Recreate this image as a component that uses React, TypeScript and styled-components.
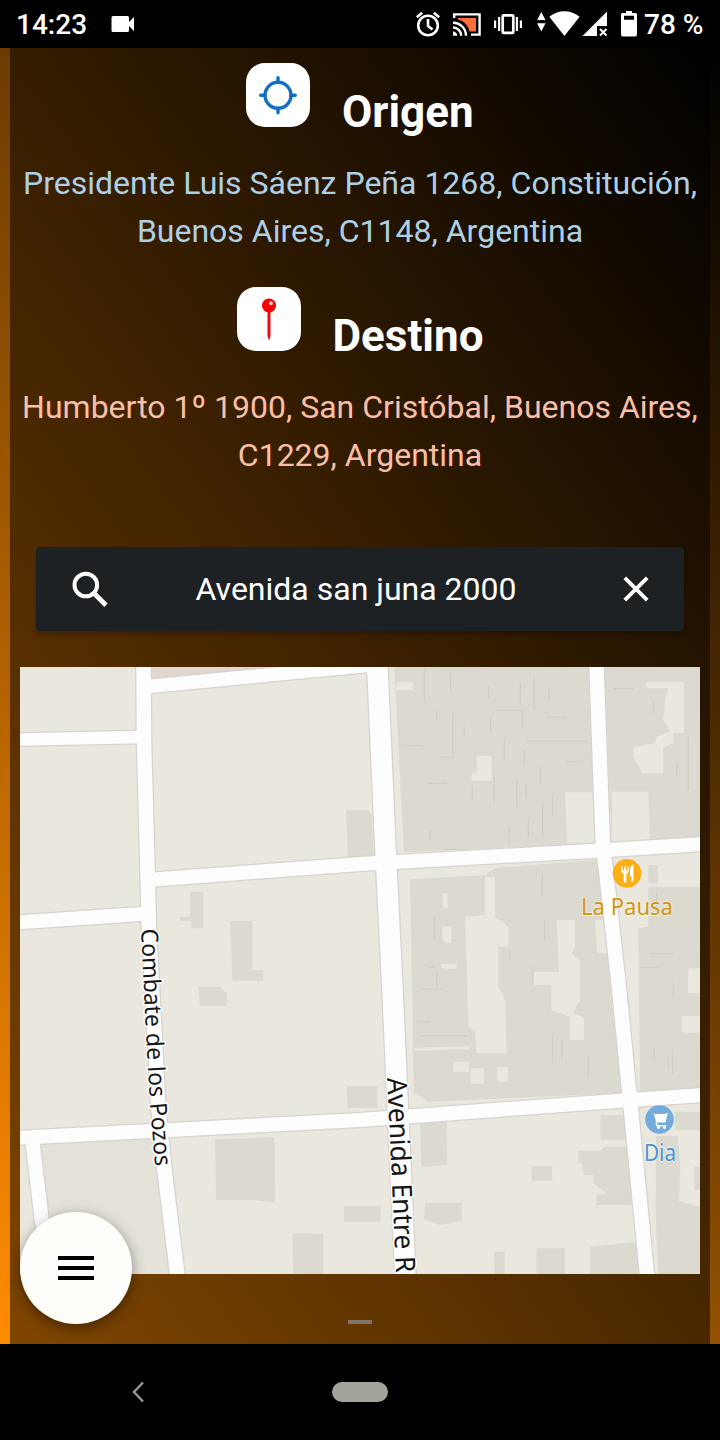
import React from 'react';
import styled, { createGlobalStyle } from 'styled-components';

const GlobalStyle = createGlobalStyle`
  * { box-sizing: border-box; }
  body { margin: 0; background: #000; font-family: Roboto, "Liberation Sans", sans-serif; }
`;

const Phone = styled.div`
  width: 720px;
  height: 1440px;
  display: flex;
  flex-direction: column;
  overflow: hidden;
  background: #000;
`;

const StatusBar = styled.header`
  height: 48px;
  flex: none;
  display: flex;
  align-items: center;
  padding: 0 17px 0 16px;
  color: #fff;
  font-size: 28px;
  font-weight: 500;
  line-height: 48px;
  white-space: nowrap;
`;

const Clock = styled.span`
  width: 94px;
  padding-top: 2px;
`;

const Battery = styled.span`
  width: 59px;
  padding-top: 2px;
  margin-left: 7px;
`;

const StatusIcon = styled.svg<{ $gap?: number; $push?: boolean }>`
  flex: none;
  height: 48px;
  margin-left: ${({ $gap = 0, $push }) => ($push ? 'auto' : `${$gap}px`)};
  fill: #fff;
`;

const Screen = styled.main`
  height: 1296px;
  flex: none;
  padding: 0 10px;
  background: linear-gradient(53deg, #ff8c00, #000);
`;

const Panel = styled.div`
  height: 100%;
  position: relative;
  display: flex;
  flex-direction: column;
  padding: 15px 10px 0;
  background: rgba(0, 0, 0, 0.5);
`;

const Place = styled.section`
  height: 224px;
`;

const PlaceHeader = styled.div`
  height: 96px;
  display: flex;
  justify-content: center;
  gap: 32px;
`;

const IconTile = styled.span`
  width: 64px;
  height: 64px;
  border-radius: 19px;
  background: #fff;
  svg { display: block; }
`;

const PlaceTitle = styled.h2<{ $width: number }>`
  width: ${({ $width }) => $width}px;
  margin: 0;
  padding-top: 22px;
  color: #fff;
  font-size: 44px;
  font-weight: 700;
  line-height: 54px;
  white-space: nowrap;
`;

const Address = styled.p<{ $color: string }>`
  margin: 0 -10px;
  color: ${({ $color }) => $color};
  font-size: 32px;
  line-height: 48px;
  text-align: center;
  white-space: nowrap;
`;

const SearchBar = styled.div`
  height: 84px;
  margin: 36px 16px 36px;
  display: grid;
  grid-template-columns: 106px 1fr 96px;
  align-items: center;
  justify-items: center;
  border-radius: 4px;
  background: #1d2124;
  box-shadow: 0 4px 5px rgba(0, 0, 0, 0.22);
`;

const Query = styled.span`
  margin-right: 18px;
  color: #fff;
  font-size: 32px;
  line-height: 48px;
  white-space: nowrap;
`;

const SearchIcon = styled.svg`
  margin-left: 1px;
`;

const MapView = styled.svg`
  display: block;
  flex: none;
  width: 680px;
  height: 607px;
`;

const Handle = styled.div`
  width: 24px;
  height: 4px;
  margin: 46px auto 0;
  background: #81736a;
`;

const MenuButton = styled.button`
  position: absolute;
  left: 10px;
  bottom: 20px;
  width: 112px;
  height: 112px;
  padding: 0;
  border: 0;
  border-radius: 50%;
  background: #fdfefa;
  box-shadow: 0 4px 14px rgba(0, 0, 0, 0.4);
  display: flex;
  flex-direction: column;
  align-items: center;
  justify-content: center;
  gap: 6px;
`;

const MenuLine = styled.span`
  width: 36px;
  height: 4px;
  background: #000;
`;

const NavBar = styled.nav`
  height: 96px;
  display: grid;
  grid-template-columns: 276px 168px 276px;
  align-items: center;
  justify-items: center;
`;

const HomePill = styled.span`
  width: 56px;
  height: 20px;
  border-radius: 10px;
  background: #a3a49a;
`;

const StatusIcons = () => (
  <>
    <StatusIcon $push width="24" viewBox="416 0 24 48">
      <g fill="none" stroke="#fff" strokeWidth="2.6">
        <circle cx="428" cy="25.5" r="9.8" />
        <path d="M428 19v7l4.5 3.5M416.8 17.3l5.4-4.6M439.2 17.3l-5.4-4.6" />
      </g>
    </StatusIcon>
    <StatusIcon $gap={13} width="28" viewBox="453 0 28 48">
      <path d="M458 18h18v13.5h-6.5C468 25 464 21 458 19.5z" fill="#fb6d3a" />
      <g fill="none" stroke="#fff" strokeWidth="2.4">
        <path d="M454.2 18v-3.6h25.4v20.2H471" />
        <path d="M453 22.7a13 13 0 0 1 13 13M453 27.5a8.2 8.2 0 0 1 8.2 8.2" />
      </g>
      <path d="M453 31.5a4.2 4.2 0 0 1 4.2 4.2H453z" />
    </StatusIcon>
    <StatusIcon $gap={13} width="28" viewBox="494 0 28 48">
      <rect x="502.7" y="15.3" width="10.6" height="17.6" rx="1" fill="none" stroke="#fff" strokeWidth="2.7" />
      <path d="M498 17h2.200v14H498zM494 20.500h2.200v7.500H494zM515.800 17h2.200v14h-2.200zM519.800 20.500h2.200v7.500h-2.200z" />
    </StatusIcon>
    <StatusIcon $gap={15} width="9" viewBox="537 0 9 48">
      <path d="M541.3 12l4.200 8h-8.400zM541.300 31.500l4.200-8.200h-8.400z" />
    </StatusIcon>
    <StatusIcon $gap={3} width="31" viewBox="549 0 31 48">
      <path d="M549.3 16.8C557.5 9.3 571.5 9.3 579.6 16.8L564.4 36z" />
    </StatusIcon>
    <StatusIcon $gap={2} width="26" viewBox="582 0 26 48">
      <path d="M582.5 36L607 11.5V26h-10v10z" />
      <path d="M600 29l6.5 6.5M606.5 29l-6.5 6.5" stroke="#fff" strokeWidth="1.9" />
    </StatusIcon>
    <StatusIcon $gap={13} width="16" viewBox="621 0 16 48">
      <path fillRule="evenodd" d="M626 11h6v2h3.5q1.5 0 1.5 1.5v20q0 2-2 2h-12q-2 0-2-2v-20q0-1.5 1.5-1.5H626zM624 15.8v4h10v-4z" />
    </StatusIcon>
  </>
);

const LAND = '#eae7de';
const BUILT = '#dbd9d0';

const roads: { d: string; w: number }[] = [
  { d: 'M143.5 660L144 740L147.5 870L149 930L158.5 1110L164.5 1170L178 1280', w: 14.5 },
  { d: 'M377 660L386 860L393 1000L405.5 1280', w: 20.5 },
  { d: 'M596.3 660L603 850L606 870L619.5 993L630 1100L647.5 1280', w: 14.3 },
  { d: 'M15 739.5L143 737', w: 12.5 },
  { d: 'M143 687L377 664.5', w: 13.5 },
  { d: 'M148 880L360 864L600 850.5L705 844', w: 14 },
  { d: 'M15 922.5L148 913.5', w: 14 },
  { d: 'M15 1138L360 1120L630 1100L705 1095', w: 14 },
  { d: 'M32 1138L43 1230', w: 14 },
];

const StreetMap = () => (
  <MapView viewBox="20 667 680 607">
    <defs>
      <path id="combate" d="M141 929L146.3 1040L150 1105L155.3 1169" />
      <path id="avenida" d="M387 1078L391.5 1170L396 1276" />
    </defs>
    <rect x="20" y="667" width="680" height="607" fill={LAND} />
    <path d="M150 667h120L150 680z" fill="#e0d8d0" />
    <path d="M40 1143L155 1137L170 1274H50z" fill="#e3e1d8" />

    <g transform="translate(0 660) scale(0.33333)" fill={BUILT}>
      <path d="M1038 450h66l10 16 8 125h-78z" />
      <path d="M570 695h40v110h-36v-22h-34v-13h30z" />
      <path d="M690 783h67v147h33v32h-93z" />
      <path d="M595 980h65l20 20v38h-80z" />
    </g>
    <g transform="translate(0 1000) scale(0.33333)" fill={BUILT}>
      <path d="M645 418l178-6 2 195-67-7H648z" />
      <path d="M1032 618h110v48h-110zM878 700l92 2v120h-90zM1040 258h92v65h-90z" />
    </g>

    <g transform="translate(360 660) scale(0.33333)">
      <g fill={BUILT}>
        <path d="M103 20H685l22 530-575 26z" />
        <path d="M733 20h290v512l-268 16z" />
        <path d="M150 658l225-12 30-22 310-25 40 421 32 278-580 28-45-30z" />
        <path d="M865 615h30v55h-30z" />
        <path d="M835 805l30-5V680h158v610l-183 6z" />
      </g>
      <g fill={LAND}>
        <path d="M110 65h50v25h-52z" />
        <path d="M350 287h45v75h-60v-22l17-5z" />
        <path d="M615 397h82l9 151h-84z" />
        <path d="M860 65h112v153h-32v32l-30 12v78h-65l-25-50v-28l65-12 5-20 40-15-20-35 5-60 10-35h-65z" />
        <path d="M755 395h110l5 150-113 4z" />
        <path d="M375 650h30v120l40 30v60h-30v120l20 40 5 160h-90l-5-70-20-10-10-330 60-5z" />
        <path d="M590 780h55v80l-10 20 25 20v120l-20 40 32 12v68h-42v-70l-56-20v-75h-52v-40h75z" />
        <path d="M248 700h15v45h-15zM248 800h26v50h-16l-12-18zM245 912h45v14h-45z" />
        <path d="M165 1163l165-5v9l-165 5zM280 1205h47v30h-47zM332 1225h40v46h-40zM412 1222h32v42h-32zM705 780h35v100h-28z" />
        <path d="M895 620h128v58H895z" />
        <path d="M985 925h35v75h-35zM965 1068h55v50h-55z" />
      </g>
      <g stroke="#aaa8a1" strokeWidth="2" opacity="0.4" fill="none">
        <path d="M193 30v90M272 40v50M386 80v35M481 70v60M566 90v30M230 150v30M278 160v130M392 170v50M313 200v30M487 160v40M493 270v40M433 240v60M541 320v50M337 380v40M403 340v90M470 360v80M499 370v40M578 410v60M505 480v50M211 510v30M447 500v60M523 50v100M548 430v100" />
        <path d="M122 256h60M240 292h45M200 370h60M500 244h180M620 304h50M410 152h80M560 172h60M250 568h70M480 580h70M760 86h60M880 120v40M950 310v40M985 230v160M890 700v60M840 922h60M870 880h70" />
        <path d="M223 770v70M205 922h18M230 940v40M180 988h70M170 1085h40M180 1127h140M547 640v70M554 780v60M450 870v30M517 920v50M605 1140v60M578 1130v80M685 1190v60M883 1165v30M938 1180v60M940 960v50M926 1190v40" />
      </g>
    </g>

    <g transform="translate(360 1000) scale(0.33333)">
      <g fill={BUILT}>
        <path d="M180 368l80-4 2 131-77 5zM515 498h62v44h-62z" />
        <path d="M655 452h65l15-12h68l14 175H710v-30l30-5-40-30v-25h-30l-5-35h-10z" />
        <path d="M722 345h70l6 75h-76zM195 608h110v55l-65 12-48-17z" />
        <path d="M530 745h85v77h-85zM402 755h32v67h-30zM690 740l140-15 8 97H690z" />
        <path d="M888 408h65l8 100-5 95 67 18v205H895l-8-190zM1003 500h20v70h-20zM945 335h75v55h-75z" />
      </g>
    </g>

    {roads.map((r) => (
      <path key={`edge-${r.d}`} d={r.d} fill="none" stroke="#d6d3ce" strokeWidth={r.w + 2.5} />
    ))}
    {roads.map((r) => (
      <path key={r.d} d={r.d} fill="none" stroke="#fdfdfe" strokeWidth={r.w} />
    ))}

    <g fontFamily="'Noto Sans', sans-serif" fill="#171717" stroke="#fff" strokeWidth="3" strokeLinejoin="round" paintOrder="stroke">
      <text fontSize="23.5">
        <textPath href="#combate" textLength="238" lengthAdjust="spacingAndGlyphs">Combate de los Pozos</textPath>
      </text>
      <text fontSize="27.5">
        <textPath href="#avenida" textLength="195" lengthAdjust="spacingAndGlyphs">Avenida Entre R</textPath>
      </text>
    </g>

    <circle cx="627" cy="873.3" r="14.3" fill="#fcae16" />
    <path d="M621.2 866.5v4.5q0 2 2.500 2.800v8.700h2.700v-8.700q2.300-.8 2.300-2.800v-4.500h-1.300v4h-1.500v-4h-1.700v4h-1.500v-4z" fill="#fff" />
    <path d="M633 864.5q-3 1.500-3 5.500v6.500h1.300v5.500h2.200v-17.500z" fill="#fff" />
    <circle cx="659.5" cy="1119.5" r="14.3" fill="#72abdc" />
    <path d="M651.2 1113h2.600l2.300 9.500h9.500l2.200-9.800-2.800 1.200h-10.300" fill="#fff" />
    <path d="M656.1 1122.5l1 3.200h9" fill="none" stroke="#fff" strokeWidth="1.6" />
    <circle cx="658.5" cy="1127.6" r="1.5" fill="#fff" />
    <circle cx="664.5" cy="1127.6" r="1.5" fill="#fff" />
    <g fontFamily="'Noto Sans', sans-serif" fontSize="23" stroke="#fff" strokeWidth="2" strokeOpacity="0.5" paintOrder="stroke">
      <text x="581" y="915" textLength="92" lengthAdjust="spacingAndGlyphs" fill="#d0960e">La Pausa</text>
      <text x="644" y="1161" textLength="32" lengthAdjust="spacingAndGlyphs" fill="#4892d8">Dia</text>
    </g>
  </MapView>
);

export default function App() {
  return (
    <>
      <GlobalStyle />
      <Phone>
        <StatusBar>
          <Clock>14:23</Clock>
          <StatusIcon width="24" viewBox="111 0 24 48">
            <path d="M114 16h14.500q1.500 0 1.500 1.500v4.500l5-5v14l-5-5v4.500q0 1.500-1.500 1.500H114q-1.500 0-1.500-1.500v-13q0-1.500 1.500-1.500z" />
          </StatusIcon>
          <StatusIcons />
          <Battery>78 %</Battery>
        </StatusBar>

        <Screen>
          <Panel>
            <Place>
              <PlaceHeader>
                <IconTile>
                  <svg width="64" height="64" viewBox="0 0 64 64" fill="none" stroke="#116fc6" strokeLinecap="round">
                    <circle cx="32" cy="32.3" r="13" strokeWidth="3.4" />
                    <path d="M32 14.8v4.5M32 45.3v4.5M14.7 32.3h4.5M44.800 32.300h4.500" strokeWidth="3.4" />
                  </svg>
                </IconTile>
                <PlaceTitle $width={132}>Origen</PlaceTitle>
              </PlaceHeader>
              <Address $color="#add0e6">
                Presidente Luis Sáenz Peña 1268, Constitución,
                <br />
                Buenos Aires, C1148, Argentina
              </Address>
            </Place>

            <Place>
              <PlaceHeader>
                <IconTile>
                  <svg width="64" height="64" viewBox="0 0 64 64">
                    <path d="M30.5 24h3v25l-1.200 4h-.6l-1.200-4z" fill="#e80b10" />
                    <circle cx="32" cy="18.5" r="7" fill="#fa0008" />
                    <circle cx="34" cy="16.3" r="2" fill="#ffc9c4" />
                  </svg>
                </IconTile>
                <PlaceTitle $width={151}>Destino</PlaceTitle>
              </PlaceHeader>
              <Address $color="#fabfa8">
                Humberto 1º 1900, San Cristóbal, Buenos Aires,
                <br />
                C1229, Argentina
              </Address>
            </Place>

            <SearchBar>
              <SearchIcon width="36" height="36" viewBox="0 0 36 36" fill="none" stroke="#fff" strokeWidth="4">
                <circle cx="13.8" cy="14" r="11.3" />
                <path d="M22 22.3L34 34.3" strokeWidth="4.8" />
              </SearchIcon>
              <Query>Avenida san juna 2000</Query>
              <svg width="26" height="26" viewBox="0 0 26 26" stroke="#fff" strokeWidth="3.8">
                <path d="M1.8 1.8l22.400 22.400M24.200 1.800L1.800 24.200" />
              </svg>
            </SearchBar>

            <StreetMap />
            <Handle />
            <MenuButton aria-label="Menu">
              <MenuLine />
              <MenuLine />
              <MenuLine />
            </MenuButton>
          </Panel>
        </Screen>

        <NavBar>
          <svg width="12" height="22" viewBox="0 0 12 22" fill="none" stroke="#99999a" strokeWidth="2.4">
            <path d="M11 1.5L2 11l9 9.500" />
          </svg>
          <HomePill />
        </NavBar>
      </Phone>
    </>
  );
}
